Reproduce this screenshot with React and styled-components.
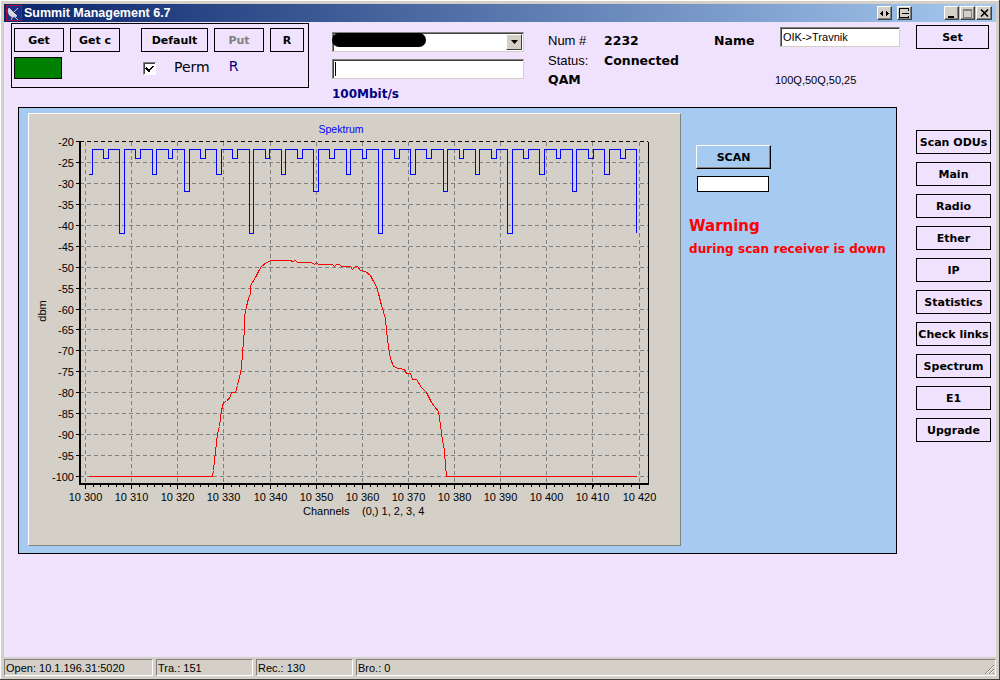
import React from 'react';
import styled, { createGlobalStyle } from 'styled-components';

const LILAC = '#f0e2fc';
const SKY = '#a6caf0';
const GREY = '#d4d0c8';
const SANS = '"Liberation Sans", Arial, sans-serif';
const WIDE = '"DejaVu Sans", Verdana, sans-serif';

const SIDE_BUTTONS = ['Scan ODUs', 'Main', 'Radio', 'Ether', 'IP', 'Statistics', 'Check links', 'Spectrum', 'E1', 'Upgrade'];
const STATUS_PANES = [
  { text: 'Open: 10.1.196.31:5020', width: 149 },
  { text: 'Tra.: 151', width: 97 },
  { text: 'Rec.: 130', width: 97 },
  { text: 'Bro.: 0', grow: true },
];

// chart geometry, in window pixels (the svg viewBox is lined up with them)
const PLOT = { left: 80, right: 648, top: 142, bottom: 484 };
const snap = (v) => Math.floor(v) + 0.5;
const gridY = (i) => snap(141.7 + i * 20.92);
const gridX = (i) => snap(85.5 + i * 46.13);
const DB_LABELS = Array.from({ length: 17 }, (_, i) => -20 - i * 5);
const CHANNELS = Array.from({ length: 13 }, (_, i) => 300 + i * 10);

const TOP_Y = 149.5;
const DEPTH = { 24: 158.5, 28: 174.5, 32: 191.5, 42: 233.5 };
const DIPS = [
  [103, 108, 24], [119, 124, 42], [135, 140, 24], [152, 156, 28], [168, 172, 24], [184, 189, 32],
  [200, 205, 24], [216, 221, 28], [232, 237, 24], [249, 253, 42], [265, 269, 24], [281, 285, 28],
  [297, 302, 24], [313, 318, 32], [329, 334, 24], [346, 350, 28], [362, 366, 24], [378, 382, 42],
  [394, 399, 24], [410, 415, 28], [426, 431, 24], [443, 447, 32], [459, 463, 24], [475, 479, 28],
  [491, 496, 24], [507, 512, 42], [523, 528, 24], [539, 544, 28], [556, 560, 24], [572, 576, 32],
  [588, 593, 24], [604, 609, 28], [620, 625, 24],
];
const bluePoints = [
  '89,174.5', '92.5,174.5', `92.5,${TOP_Y}`,
  ...DIPS.flatMap(([a, b, d]) => [
    `${a}.5,${TOP_Y}`, `${a}.5,${DEPTH[d]}`, `${b}.5,${DEPTH[d]}`, `${b}.5,${TOP_Y}`,
  ]),
  `636.5,${TOP_Y}`, '636.5,233',
].join(' ');

// traced from the curve: x = 200 + a / 3, y = 250 + b / 3
const RED_TRACE = [
  [37, 678], [40, 660], [42, 630], [45, 605], [48, 580], [52, 550], [57, 530], [60, 505], [65, 480], [70, 458],
  [78, 455], [90, 440], [95, 428], [107, 426], [113, 405], [120, 370], [125, 350], [128, 310], [130, 270],
  [132, 240], [134, 200], [138, 170], [145, 145], [150, 130], [152, 105], [165, 82], [175, 65], [185, 48],
  [200, 38], [215, 31], [272, 31], [278, 34], [285, 31], [292, 36], [335, 37], [342, 42], [350, 37], [356, 43],
  [398, 43], [403, 48], [408, 43], [418, 43], [425, 48], [452, 48], [457, 57], [465, 49], [473, 49], [480, 60],
  [495, 65], [510, 76], [520, 95], [530, 108], [535, 130], [545, 165], [555, 205], [560, 240], [565, 290],
  [572, 325], [580, 350], [595, 356], [612, 358], [620, 370], [630, 371], [638, 388], [648, 389], [665, 413],
  [680, 428], [695, 458], [703, 469], [715, 485], [722, 525], [728, 570], [733, 600], [735, 650], [738, 675],
];
const redPoints = [
  '89,476.5', '212.5,476.5',
  ...RED_TRACE.map(([a, b]) => `${snap(200 + a / 3)},${snap(250 + b / 3)}`),
  '446.5,476.5', '637,476.5',
].join(' ');

const GlobalStyle = createGlobalStyle`
  html, body { margin: 0; padding: 0; background: ${GREY}; }
  #root { width: 1000px; height: 680px; }
`;

const Win = styled.div`
  box-sizing: border-box;
  width: 1000px;
  height: 680px;
  display: flex;
  flex-direction: column;
  padding: 4px 3px 3px;
  background: ${GREY};
  border-right: 1px solid #404040;
  border-bottom: 1px solid #404040;
  box-shadow: inset 1px 1px 0 #fff;
  font-family: ${SANS};
`;

const TitleBar = styled.div`
  height: 18px;
  margin-left: 1px;
  display: flex;
  align-items: center;
  padding: 0 4px 0 2px;
  background: linear-gradient(to right, #0a246a, ${SKY});
`;

const AppIcon = styled.svg`
  width: 16px;
  height: 16px;
  flex: none;
`;

const TitleText = styled.span`
  margin-left: 2px;
  flex: 1;
  font: bold 12.5px ${SANS};
  color: #fff;
  white-space: nowrap;
`;

const CaptionGroup = styled.div`
  display: flex;
  gap: ${(p) => p.$gap}px;
  margin-right: ${(p) => p.$mr || 0}px;
`;

const CaptionButton = styled.div`
  box-sizing: border-box;
  width: ${(p) => p.$w || 15}px;
  height: 14px;
  display: flex;
  align-items: center;
  justify-content: center;
  background: ${GREY};
  border: 1px solid;
  border-color: #fff #404040 #404040 #fff;
  box-shadow: inset -1px -1px 0 #808080;
`;

const Client = styled.div`
  flex: 1;
  margin-left: 1px;
  display: flex;
  flex-direction: column;
  background: ${LILAC};
`;

const TopRow = styled.div`
  height: 85px;
  display: flex;
  align-items: flex-start;
  padding: 1px 0 0 7px;
  box-sizing: border-box;
`;

const GroupBox = styled.div`
  box-sizing: border-box;
  width: 298px;
  height: 65px;
  padding: 4px 2px 0;
  border: 1px solid #000;
  display: flex;
  flex-direction: column;
  gap: 5px;
`;

const ButtonRow = styled.div`
  display: flex;
`;

const FlatButton = styled.button`
  box-sizing: border-box;
  width: ${(p) => p.$w}px;
  height: ${(p) => p.$h || 24}px;
  margin-top: ${(p) => p.$mt || 0}px;
  margin-left: ${(p) => p.$ml || 0}px;
  padding: 0;
  flex: none;
  background: ${LILAC};
  border: 1px solid #000;
  border-radius: 0;
  font: bold 11px ${WIDE};
  color: ${(p) => (p.disabled ? '#808080' : '#000')};
`;

const OptionRow = styled.div`
  display: flex;
  align-items: center;
  height: 22px;
`;

const Indicator = styled.div`
  box-sizing: border-box;
  width: 48px;
  height: 22px;
  background: #008000;
  border: 1px solid #000;
`;

const CheckBox = styled.div`
  box-sizing: border-box;
  width: 13px;
  height: 13px;
  margin-left: 81px;
  display: flex;
  align-items: center;
  justify-content: center;
  background: #fff;
  border: 1px solid;
  border-color: #808080 #fff #fff #808080;
  box-shadow: inset 1px 1px 0 #404040;
`;

const PermLabel = styled.span`
  margin: 0 0 2px 18px;
  font: 14px ${WIDE};
  color: #000;
`;

const ModeLetter = styled.span`
  margin: 0 0 4px 19px;
  font: 14px ${WIDE};
  color: #000080;
`;

const LinkColumn = styled.div`
  width: 192px;
  margin: 9px 0 0 23px;
  display: flex;
  flex-direction: column;
  gap: 7px;
`;

const Sunken = styled.div`
  box-sizing: border-box;
  width: ${(p) => p.$w || 192}px;
  height: 20px;
  display: flex;
  align-items: center;
  background: #fff;
  border: 1px solid;
  border-color: #808080 ${GREY} ${GREY} #808080;
  box-shadow: inset 1px 1px 0 #404040;
`;

const Redacted = styled.div`
  width: 94px;
  height: 14px;
  margin: -4px 0 0 -1px;
  border-radius: 7px;
  background: #000;
`;

const DropButton = styled.div`
  box-sizing: border-box;
  width: 16px;
  height: 16px;
  margin: 0 1px 0 auto;
  display: flex;
  align-items: center;
  justify-content: center;
  background: ${GREY};
  border: 1px solid;
  border-color: #fff #404040 #404040 #fff;
`;

const Caret = styled.div`
  width: 1px;
  height: 14px;
  margin-left: 2px;
  background: #000;
`;

const SpeedLabel = styled.div`
  margin-top: 1px;
  font: bold 12px ${WIDE};
  color: #000080;
`;

const InfoGrid = styled.div`
  width: 166px;
  margin: 8px 0 0 24px;
  display: grid;
  grid-template-columns: 56px 1fr;
  grid-auto-rows: 19.5px;
  align-items: center;
`;

const InfoKey = styled.span`
  font: 13px ${SANS};
  color: #000;
`;

const InfoValue = styled.span`
  font: bold 12.5px ${WIDE};
  color: #000;
  grid-column: ${(p) => p.$span || 'auto'};
`;

const NameBlock = styled.div`
  width: 202px;
  display: flex;
  flex-direction: column;
`;

const NameRow = styled.div`
  display: flex;
  align-items: flex-start;
  margin-top: 4px;
`;

const NameLabel = styled.span`
  width: 66px;
  margin-top: 6px;
  font: bold 12.5px ${WIDE};
  color: #000;
`;

const NameText = styled.span`
  margin-left: 2px;
  font: 11px ${SANS};
  color: #000;
`;

const RatesText = styled.div`
  margin: 26px 0 0 61px;
  font: 11px ${SANS};
  color: #000;
`;

const MainRow = styled.div`
  flex: 1;
  display: flex;
  align-items: flex-start;
  padding-left: 14px;
`;

const BluePanel = styled.div`
  box-sizing: border-box;
  width: 879px;
  height: 447px;
  padding: 5px 0 0 9px;
  display: flex;
  background: ${SKY};
  border: 1px solid #000;
`;

const ChartPanel = styled.div`
  box-sizing: border-box;
  width: 653px;
  height: 433px;
  flex: none;
  background: ${GREY};
  border: 1px solid;
  border-color: #fff #808080 #808080 #fff;
`;

const ChartSvg = styled.svg`
  display: block;
  width: 651px;
  height: 431px;
`;

const ScanColumn = styled.div`
  margin-left: 8px;
  padding-top: 32px;
  display: flex;
  flex-direction: column;
`;

const ScanButton = styled.button`
  box-sizing: border-box;
  width: 75px;
  height: 24px;
  margin-left: 7px;
  padding: 0;
  background: ${SKY};
  border: 1px solid;
  border-color: #fff #000 #000 #fff;
  border-radius: 0;
  box-shadow: inset -1px -1px 0 #808080;
  font: bold 11px ${WIDE};
  color: #000;
`;

const ProgressBox = styled.div`
  box-sizing: border-box;
  width: 72px;
  height: 16px;
  margin: 7px 0 0 8px;
  background: #fff;
  border: 1px solid #000;
`;

const WarningTitle = styled.div`
  margin-top: 25px;
  font: bold 15px ${WIDE};
  color: #ff0000;
`;

const WarningText = styled.div`
  margin-top: 7px;
  font: bold 12px ${WIDE};
  letter-spacing: 0.07px;
  color: #ff0000;
  white-space: nowrap;
`;

const SideColumn = styled.div`
  margin: 23px 0 0 19px;
  display: flex;
  flex-direction: column;
  gap: 8px;
`;

const StatusBar = styled.div`
  box-sizing: border-box;
  height: 19px;
  margin-left: 1px;
  padding-top: 2px;
  display: flex;
  gap: 3px;
  background: ${GREY};
`;

const StatusPane = styled.div`
  box-sizing: border-box;
  width: ${(p) => (p.$grow ? 'auto' : `${p.$w}px`)};
  flex: ${(p) => (p.$grow ? 1 : 'none')};
  padding-left: 1px;
  display: flex;
  align-items: center;
  border: 1px solid;
  border-color: #808080 #fff #fff #808080;
  font: 11px ${SANS};
  color: #000;
`;

const Grip = styled.svg`
  width: 12px;
  height: 12px;
  margin: auto 0 0 auto;
`;

function DishIcon() {
  return (
    <AppIcon viewBox="0 0 16 16">
      <rect x="0.5" y="0.5" width="15" height="15" fill="#1c2f86" stroke="#a01040" />
      <path d="M3 3 L11 11 C8 13 4 12 3 9 C2 7 2 5 3 3 Z" fill="#d8d8d8" stroke="#fff" strokeWidth="0.6" />
      <path d="M7 8 L12 3 M7 11 L5 15 M8 11 L12 15" stroke="#c8c8c8" strokeWidth="1" />
    </AppIcon>
  );
}

function Chart() {
  return (
    <ChartSvg viewBox="29 114 651 431" fontFamily={SANS} fontSize="11" shapeRendering="crispEdges">
      <text x="341" y="133" textAnchor="middle" fill="#0000ff" fontSize="10.5">Spektrum</text>

      {DB_LABELS.map((db, i) => (
        <g key={db}>
          <line x1={PLOT.left} x2={PLOT.right} y1={gridY(i)} y2={gridY(i)}
            stroke={i === 0 ? '#000' : '#808080'} strokeDasharray="4 3" />
          <line x1="76" x2={PLOT.left} y1={gridY(i)} y2={gridY(i)} stroke="#000" />
          <text x="74" y={gridY(i) + 4} textAnchor="end" fill="#000">{db}</text>
        </g>
      ))}

      {CHANNELS.map((ch, i) => (
        <g key={ch}>
          <line x1={gridX(i)} x2={gridX(i)} y1={PLOT.top} y2={PLOT.bottom} stroke="#808080" strokeDasharray="4 3" />
          <line x1={gridX(i)} x2={gridX(i)} y1={PLOT.bottom} y2={PLOT.bottom + 5} stroke="#000" />
          <text x={gridX(i)} y="501" textAnchor="middle" fill="#000">{`10 ${ch}`}</text>
        </g>
      ))}
      {Array.from({ length: 72 }, (_, i) => snap(85.5 + i * 7.69)).map((x) => (
        <line key={x} x1={x} x2={x} y1={PLOT.bottom} y2={PLOT.bottom + 3} stroke="#000" />
      ))}

      <line x1="80" x2="80" y1={PLOT.top} y2={PLOT.bottom + 1} stroke="#000" strokeWidth="2" />
      <line x1="79" x2="649" y1={PLOT.bottom} y2={PLOT.bottom} stroke="#000" strokeWidth="2" />
      <line x1={PLOT.right + 0.5} x2={PLOT.right + 0.5} y1={PLOT.top} y2={PLOT.bottom} stroke="#000" />

      <polyline points={bluePoints} fill="none" stroke="#0000ff" />
      <polyline points={redPoints} fill="none" stroke="#ff0000" />

      <text x="303" y="515" fill="#000">Channels</text>
      <text x="362" y="515" fill="#000">(0,) 1, 2, 3, 4</text>
      <text transform="translate(46 311) rotate(-90)" textAnchor="middle" fill="#000">dbm</text>
    </ChartSvg>
  );
}

export default function App() {
  return (
    <Win>
      <GlobalStyle />
      <TitleBar>
        <DishIcon />
        <TitleText>Summit Management 6.7</TitleText>
        <CaptionGroup $gap={5} $mr={32}>
          <CaptionButton>
            <svg width="9" height="7" viewBox="0 0 9 7" shapeRendering="crispEdges">
              <path d="M3 0v7L0 3.5zM6 0v7l3-3.5z" fill="#000" />
            </svg>
          </CaptionButton>
          <CaptionButton>
            <svg width="11" height="10" viewBox="0 0 11 10" shapeRendering="crispEdges">
              <path d="M9.5 2.5V.5H.5v9h9v-2M3 5h7" fill="none" stroke="#000" />
            </svg>
          </CaptionButton>
        </CaptionGroup>
        <CaptionGroup $gap={1}>
          <CaptionButton>
            <svg width="9" height="9" viewBox="0 0 9 9" shapeRendering="crispEdges">
              <rect x="1" y="7" width="6" height="2" fill="#000" />
            </svg>
          </CaptionButton>
          <CaptionButton>
            <svg width="9" height="9" viewBox="0 0 9 9" shapeRendering="crispEdges">
              <rect x="0.5" y="0.5" width="8" height="8" fill="none" stroke="#808080" />
              <rect x="0" y="0" width="9" height="2" fill="#808080" />
            </svg>
          </CaptionButton>
          <CaptionButton $w={16}>
            <svg width="9" height="8" viewBox="0 0 9 8">
              <path d="M1 0.5 L8 7.5 M8 0.5 L1 7.5" stroke="#000" strokeWidth="1.6" />
            </svg>
          </CaptionButton>
        </CaptionGroup>
      </TitleBar>

      <Client>
        <TopRow>
          <GroupBox>
            <ButtonRow>
              <FlatButton $w={50}>Get</FlatButton>
              <FlatButton $w={50} $ml={6}>Get c</FlatButton>
              <FlatButton $w={67} $ml={21}>Default</FlatButton>
              <FlatButton $w={50} $ml={6} disabled>Put</FlatButton>
              <FlatButton $w={34} $ml={6}>R</FlatButton>
            </ButtonRow>
            <OptionRow>
              <Indicator />
              <CheckBox>
                <svg width="9" height="9" viewBox="0 0 9 9" shapeRendering="crispEdges">
                  <path d="M1 4l3 3 4-5" fill="none" stroke="#000" strokeWidth="1.6" />
                </svg>
              </CheckBox>
              <PermLabel>Perm</PermLabel>
              <ModeLetter>R</ModeLetter>
            </OptionRow>
          </GroupBox>

          <LinkColumn>
            <Sunken>
              <Redacted />
              <DropButton>
                <svg width="7" height="4" viewBox="0 0 7 4">
                  <path d="M0 0h7L3.5 4z" fill="#000" />
                </svg>
              </DropButton>
            </Sunken>
            <Sunken><Caret /></Sunken>
            <SpeedLabel>100Mbit/s</SpeedLabel>
          </LinkColumn>

          <InfoGrid>
            <InfoKey>Num #</InfoKey>
            <InfoValue>2232</InfoValue>
            <InfoKey>Status:</InfoKey>
            <InfoValue>Connected</InfoValue>
            <InfoValue $span="1 / 3">QAM</InfoValue>
          </InfoGrid>

          <NameBlock>
            <NameRow>
              <NameLabel>Name</NameLabel>
              <Sunken $w={120}><NameText>OIK-&gt;Travnik</NameText></Sunken>
            </NameRow>
            <RatesText>100Q,50Q,50,25</RatesText>
          </NameBlock>

          <FlatButton $w={73} $mt={2}>Set</FlatButton>
        </TopRow>

        <MainRow>
          <BluePanel>
            <ChartPanel>
              <Chart />
            </ChartPanel>
            <ScanColumn>
              <ScanButton>SCAN</ScanButton>
              <ProgressBox />
              <WarningTitle>Warning</WarningTitle>
              <WarningText>during scan receiver is down</WarningText>
            </ScanColumn>
          </BluePanel>
          <SideColumn>
            {SIDE_BUTTONS.map((label) => (
              <FlatButton key={label} $w={75}>{label}</FlatButton>
            ))}
          </SideColumn>
        </MainRow>
      </Client>

      <StatusBar>
        {STATUS_PANES.map((pane) => (
          <StatusPane key={pane.text} $w={pane.width} $grow={pane.grow}>
            {pane.text}
            {pane.grow && (
              <Grip viewBox="0 0 12 12" shapeRendering="crispEdges">
                <path d="M11 2 L2 11 M11 6 L6 11 M11 10 L10 11" stroke="#808080" strokeWidth="1.4" />
                <path d="M11 3 L3 11 M11 7 L7 11" stroke="#fff" strokeWidth="1" />
              </Grip>
            )}
          </StatusPane>
        ))}
      </StatusBar>
    </Win>
  );
}
